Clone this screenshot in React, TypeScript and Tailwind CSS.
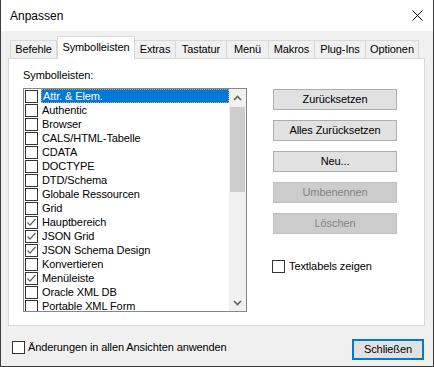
import { ReactNode } from "react";

const items: { label: string; checked?: boolean }[] = [
  { label: "Attr. & Elem." },
  { label: "Authentic" },
  { label: "Browser" },
  { label: "CALS/HTML-Tabelle" },
  { label: "CDATA" },
  { label: "DOCTYPE" },
  { label: "DTD/Schema" },
  { label: "Globale Ressourcen" },
  { label: "Grid" },
  { label: "Hauptbereich", checked: true },
  { label: "JSON Grid", checked: true },
  { label: "JSON Schema Design", checked: true },
  { label: "Konvertieren" },
  { label: "Menüleiste", checked: true },
  { label: "Oracle XML DB" },
  { label: "Portable XML Form" },
];

const tabs = [
  { label: "Befehle", w: "w-[47px] border-l" },
  { label: "Symbolleisten", w: "w-[78px]", active: true },
  { label: "Extras", w: "w-[41px]" },
  { label: "Tastatur", w: "w-[51px]" },
  { label: "Menü", w: "w-[42px]" },
  { label: "Makros", w: "w-[46px]" },
  { label: "Plug-Ins", w: "w-[51px]" },
  { label: "Optionen", w: "w-[53px]" },
];

function CheckBox({ checked }: { checked?: boolean }) {
  return (
    <div className="w-[13px] h-[13px] shrink-0 border border-[#333333] bg-white flex items-center justify-center">
      {checked ? (
        <svg width="11" height="11" viewBox="0 0 11 11">
          <path d="M1.5 5.5 L4 8.2 L9.5 2" fill="none" stroke="#5c5c5c" strokeWidth="1.2" />
        </svg>
      ) : null}
    </div>
  );
}

function Button({ children, disabled }: { children: ReactNode; disabled?: boolean }) {
  return (
    <div
      className={
        disabled
          ? "w-[124px] h-[21px] border border-[#bfbfbf] bg-[#cccccc] text-[#838383] flex items-center justify-center"
          : "w-[124px] h-[21px] border border-[#adadad] bg-[#e1e1e1] flex items-center justify-center"
      }
    >
      {children}
    </div>
  );
}

function Chevron({ up }: { up?: boolean }) {
  return (
    <svg width="9" height="6" viewBox="0 0 9 6">
      <path
        d={up ? "M1 5 L4.5 1.5 L8 5" : "M1 1 L4.5 4.5 L8 1"}
        fill="none"
        stroke="#606060"
        strokeWidth="1.6"
      />
    </svg>
  );
}

export default function App() {
  return (
    <div className="w-[434px] h-[367px] flex flex-col bg-[#f0f0f0] border-x border-b border-[#3c3c3c] font-['Liberation_Sans',Arial,sans-serif] text-[11px] tracking-[-0.1px] text-black overflow-hidden">
      <div className="h-[31px] shrink-0 bg-white flex items-center justify-between pl-[9px] pr-[10px]">
        <span className="text-[12px] tracking-normal">Anpassen</span>
        <svg width="11" height="11" viewBox="0 0 11 11">
          <path d="M0.5 0.5 L10.5 10.5 M10.5 0.5 L0.5 10.5" stroke="#000" strokeWidth="1" />
        </svg>
      </div>

      <div className="flex flex-col pl-[7px] pr-[8px]">
        <div className="flex items-end h-[27px] pl-[2px]">
          {tabs.map((t) =>
            t.active ? (
              <div
                key={t.label}
                className={`${t.w} h-[23px] -mb-px relative z-10 bg-white border border-b-0 border-[#d9d9d9] flex items-center justify-center pb-[2px]`}
              >
                {t.label}
              </div>
            ) : (
              <div
                key={t.label}
                className={`${t.w} h-[18px] border-t border-r border-[#d9d9d9] flex items-center justify-center`}
              >
                {t.label}
              </div>
            )
          )}
        </div>

        <div className="h-[268px] bg-white border border-[#d9d9d9] flex pl-[14px] pt-[9px]">
          <div className="flex flex-col">
            <div className="h-[14px] leading-[14px]">Symbolleisten:</div>
            <div className="mt-[6px] w-[224px] h-[224px] border border-[#828790] flex">
              <div className="flex-1 flex flex-col overflow-hidden">
                {items.map((it, i) => (
                  <div key={it.label} className="h-[14px] shrink-0 flex items-center pl-px gap-[3px]">
                    <CheckBox checked={it.checked} />
                    {i === 0 ? (
                      <div className="flex-1 h-[14px] bg-[#0078d7] text-white border border-dotted border-[#f39a2c] flex items-center pl-px">
                        {it.label}
                      </div>
                    ) : (
                      <div className="h-[14px] leading-[14px] pl-px">{it.label}</div>
                    )}
                  </div>
                ))}
              </div>
              <div className="w-[17px] bg-[#f0f0f0] flex flex-col items-center">
                <div className="h-[17px] w-full flex items-center justify-center">
                  <Chevron up />
                </div>
                <div className="w-[15px] h-[85px] mt-px bg-[#cdcdcd]" />
                <div className="flex-1" />
                <div className="h-[17px] w-full flex items-center justify-center">
                  <Chevron />
                </div>
              </div>
            </div>
          </div>

          <div className="flex flex-col ml-[26px] pt-[21px]">
            <div className="flex flex-col gap-[10px]">
              <Button>Zurücksetzen</Button>
              <Button>Alles Zurücksetzen</Button>
              <Button>Neu...</Button>
              <Button disabled>Umbenennen</Button>
              <Button disabled>Löschen</Button>
            </div>
            <div className="mt-[24px] flex items-center gap-[4px] -ml-px">
              <CheckBox />
              <span>Textlabels zeigen</span>
            </div>
          </div>
        </div>

        <div className="flex items-start justify-between mt-[13px] pl-[4px]">
          <div className="flex items-center gap-[3px]">
            <CheckBox />
            <span>Änderungen in allen Ansichten anwenden</span>
          </div>
          <div className="w-[72px] h-[21px] mr-px border-2 border-[#0078d7] bg-[#e1e1e1] flex items-center justify-center">
            Schließen
          </div>
        </div>
      </div>
    </div>
  );
}
